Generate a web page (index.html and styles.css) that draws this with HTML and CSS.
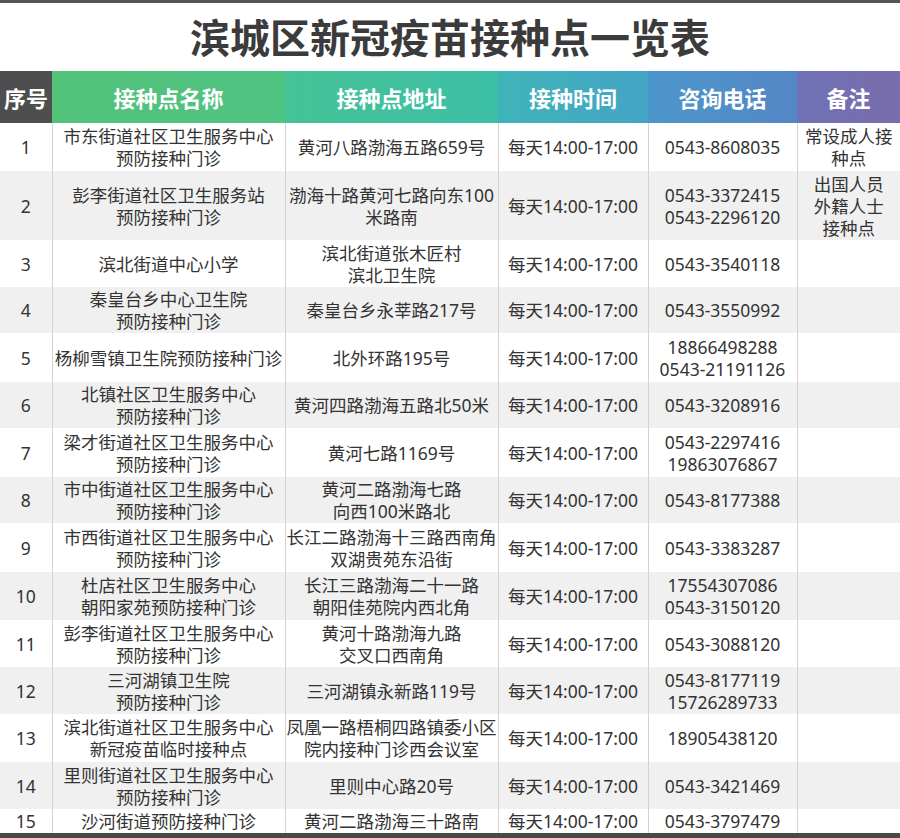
FILE: index.html
```html
<!DOCTYPE html>
<html lang="zh-CN">
<head>
<meta charset="utf-8">
<title>滨城区新冠疫苗接种点一览表</title>
<link rel="stylesheet" href="styles.css">
</head>
<body>
<div class="frame">
  <h1 class="title">滨城区新冠疫苗接种点一览表</h1>
  <table class="sites">
    <colgroup>
      <col class="c-no"><col class="c-name"><col class="c-addr"><col class="c-time"><col class="c-tel"><col class="c-note">
    </colgroup>
    <thead>
      <tr>
        <th class="h-no">序号</th>
        <th class="h-name">接种点名称</th>
        <th class="h-addr">接种点地址</th>
        <th class="h-time">接种时间</th>
        <th class="h-tel">咨询电话</th>
        <th class="h-note">备注</th>
      </tr>
    </thead>
    <tbody>
      <tr><td>1</td><td>市东街道社区卫生服务中心<br>预防接种门诊</td><td>黄河八路渤海五路659号</td><td>每天14:00-17:00</td><td>0543-8608035</td><td>常设成人接<br>种点</td></tr>
      <tr><td>2</td><td>彭李街道社区卫生服务站<br>预防接种门诊</td><td>渤海十路黄河七路向东100<br>米路南</td><td>每天14:00-17:00</td><td>0543-3372415<br>0543-2296120</td><td>出国人员<br>外籍人士<br>接种点</td></tr>
      <tr><td>3</td><td>滨北街道中心小学</td><td>滨北街道张木匠村<br>滨北卫生院</td><td>每天14:00-17:00</td><td>0543-3540118</td><td></td></tr>
      <tr><td>4</td><td>秦皇台乡中心卫生院<br>预防接种门诊</td><td>秦皇台乡永莘路217号</td><td>每天14:00-17:00</td><td>0543-3550992</td><td></td></tr>
      <tr><td>5</td><td>杨柳雪镇卫生院预防接种门诊</td><td>北外环路195号</td><td>每天14:00-17:00</td><td>18866498288<br>0543-21191126</td><td></td></tr>
      <tr><td>6</td><td>北镇社区卫生服务中心<br>预防接种门诊</td><td>黄河四路渤海五路北50米</td><td>每天14:00-17:00</td><td>0543-3208916</td><td></td></tr>
      <tr><td>7</td><td>梁才街道社区卫生服务中心<br>预防接种门诊</td><td>黄河七路1169号</td><td>每天14:00-17:00</td><td>0543-2297416<br>19863076867</td><td></td></tr>
      <tr><td>8</td><td>市中街道社区卫生服务中心<br>预防接种门诊</td><td>黄河二路渤海七路<br>向西100米路北</td><td>每天14:00-17:00</td><td>0543-8177388</td><td></td></tr>
      <tr><td>9</td><td>市西街道社区卫生服务中心<br>预防接种门诊</td><td>长江二路渤海十三路西南角<br>双湖贵苑东沿街</td><td>每天14:00-17:00</td><td>0543-3383287</td><td></td></tr>
      <tr><td>10</td><td>杜店社区卫生服务中心<br>朝阳家苑预防接种门诊</td><td>长江三路渤海二十一路<br>朝阳佳苑院内西北角</td><td>每天14:00-17:00</td><td>17554307086<br>0543-3150120</td><td></td></tr>
      <tr><td>11</td><td>彭李街道社区卫生服务中心<br>预防接种门诊</td><td>黄河十路渤海九路<br>交叉口西南角</td><td>每天14:00-17:00</td><td>0543-3088120</td><td></td></tr>
      <tr><td>12</td><td>三河湖镇卫生院<br>预防接种门诊</td><td>三河湖镇永新路119号</td><td>每天14:00-17:00</td><td>0543-8177119<br>15726289733</td><td></td></tr>
      <tr><td>13</td><td>滨北街道社区卫生服务中心<br>新冠疫苗临时接种点</td><td>凤凰一路梧桐四路镇委小区<br>院内接种门诊西会议室</td><td>每天14:00-17:00</td><td>18905438120</td><td></td></tr>
      <tr><td>14</td><td>里则街道社区卫生服务中心<br>预防接种门诊</td><td>里则中心路20号</td><td>每天14:00-17:00</td><td>0543-3421469</td><td></td></tr>
      <tr><td>15</td><td>沙河街道预防接种门诊</td><td>黄河二路渤海三十路南</td><td>每天14:00-17:00</td><td>0543-3797479</td><td></td></tr>
    </tbody>
  </table>
</div>
</body>
</html>
```
FILE: styles.css
```css
html, body {
  margin: 0;
  padding: 0;
  background: #ffffff;
}

.frame {
  width: 900px;
  height: 838px;
  overflow: hidden;
  box-sizing: border-box;
  border-top: 3px solid #565656;
  border-bottom: 5px solid #484848;
  font-family: "Noto Sans", "Noto Sans CJK SC", sans-serif;
}

.title {
  margin: 0;
  height: 68px;
  display: flex;
  align-items: center;
  justify-content: center;
  font-family: "Noto Sans CJK SC", sans-serif;
  font-weight: 700;
  font-size: 40px;
  letter-spacing: 0;
  color: #3b3b3b;
  padding-bottom: 2px;
  box-sizing: border-box;
}

.sites {
  width: 900px;
  table-layout: fixed;
  border-collapse: collapse;
  border-spacing: 0;
}

.c-no { width: 52px; }
.c-name { width: 233px; }
.c-addr { width: 213px; }
.c-time { width: 150px; }
.c-tel { width: 149px; }
.c-note { width: 103px; }

.sites th {
  height: 52px;
  padding: 0;
  color: #ffffff;
  font-family: "Noto Sans CJK SC", sans-serif;
  font-weight: 700;
  font-size: 22px;
  text-align: center;
  vertical-align: middle;
  white-space: nowrap;
}

.h-no { background: #4e4e4e; }
.h-name { background: linear-gradient(90deg, #52c27a 0%, #4fc382 100%); }
.h-addr { background: linear-gradient(90deg, #45c296 0%, #3dbfa6 100%); }
.h-time { background: linear-gradient(90deg, #3fb4b8 0%, #44a4c6 100%); }
.h-tel { background: linear-gradient(90deg, #4c96cb 0%, #5487c5 100%); }
.h-note { background: linear-gradient(90deg, #6f72b4 0%, #7a6cad 100%); }

.sites td {
  padding: 0 1px;
  font-size: 17.5px;
  line-height: 22px;
  color: #333333;
  text-align: center;
  vertical-align: middle;
  white-space: nowrap;
  overflow: visible;
  border-left: 1px solid #d2d2d2;
  border-right: 1px solid #d2d2d2;
}

.sites td:first-child { border-left: none; }
.sites td:last-child { border-right: none; }

.sites tbody tr:nth-child(odd) { background: #ffffff; }
.sites tbody tr:nth-child(even) { background: #f0f0f0; }

.sites tbody tr { height: 47px; }
.sites tbody tr:nth-child(1) { height: 48px; }
.sites tbody tr:nth-child(2) { height: 69px; }
.sites tbody tr:nth-child(3) { height: 47px; }
.sites tbody tr:nth-child(4) { height: 46px; }
.sites tbody tr:nth-child(5) { height: 49px; }
.sites tbody tr:nth-child(6) { height: 46px; }
.sites tbody tr:nth-child(7) { height: 49px; }
.sites tbody tr:nth-child(8) { height: 46px; }
.sites tbody tr:nth-child(9) { height: 49px; }
.sites tbody tr:nth-child(10) { height: 48px; }
.sites tbody tr:nth-child(11) { height: 47px; }
.sites tbody tr:nth-child(12) { height: 47px; }
.sites tbody tr:nth-child(13) { height: 48px; }
.sites tbody tr:nth-child(14) { height: 47px; }
.sites tbody tr:nth-child(15) { height: 24px; }
```
